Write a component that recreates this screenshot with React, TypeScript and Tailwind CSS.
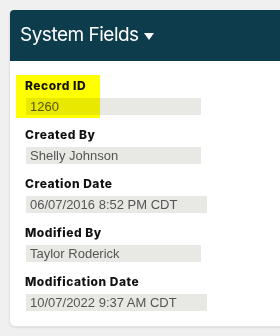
const FIELDS = [
  { label: "Record ID", value: "1260", w: "w-[175px]", highlight: true },
  { label: "Created By", value: "Shelly Johnson", w: "w-[175px]" },
  { label: "Creation Date", value: "06/07/2016 8:52 PM CDT", w: "w-[181px]" },
  { label: "Modified By", value: "Taylor Roderick", w: "w-[175px]" },
  { label: "Modification Date", value: "10/07/2022 9:37 AM CDT", w: "w-[181px]" },
];

const App = () => {
  return (
    <div className="w-[280px] h-[336px] bg-[#f0f0f0] overflow-hidden pt-[10px] pl-[9px]">
      <div className="w-[290px] bg-white rounded-t-[4px] rounded-b-[6px] border border-[#e3e3e3] border-t-0 shadow-[0_1px_2px_rgba(0,0,0,0.08)]">
        {/* Header */}
        <div className="h-[51px] bg-[#0d3c4d] rounded-t-[4px] flex items-center px-[10px] gap-[5px]">
          <span className="text-white text-[19px] font-['Inter',sans-serif] tracking-[-0.5px]">
            System Fields
          </span>
          <svg width="10" height="7" viewBox="0 0 10 7" className="mt-[1px]">
            <path d="M0 0 H10 L5 7 Z" fill="white" />
          </svg>
        </div>

        {/* Fields */}
        <div className="pt-[17px] pb-[15px] pl-[15px] flex flex-col gap-[12px]">
          {FIELDS.map((f) => (
            <div key={f.label} className="relative">
              <div className="text-[12px] leading-[16px] font-extrabold text-[#111] font-['Inter',sans-serif] tracking-[0.5px]">
                {f.label}
              </div>
              <div
                className={`${f.w} mt-[4px] ml-px h-[17px] bg-[#e8e8e4] pl-[4px] text-[13px] leading-[17px] text-[#555] font-['Liberation_Sans',Arial,sans-serif]`}
              >
                {f.value}
              </div>
              {f.highlight && (
                <div className="absolute left-[-9px] top-[-3px] w-[84px] h-[43px] bg-[#ffff00] mix-blend-multiply pointer-events-none" />
              )}
            </div>
          ))}
        </div>
      </div>
    </div>
  );
};

export default App;
